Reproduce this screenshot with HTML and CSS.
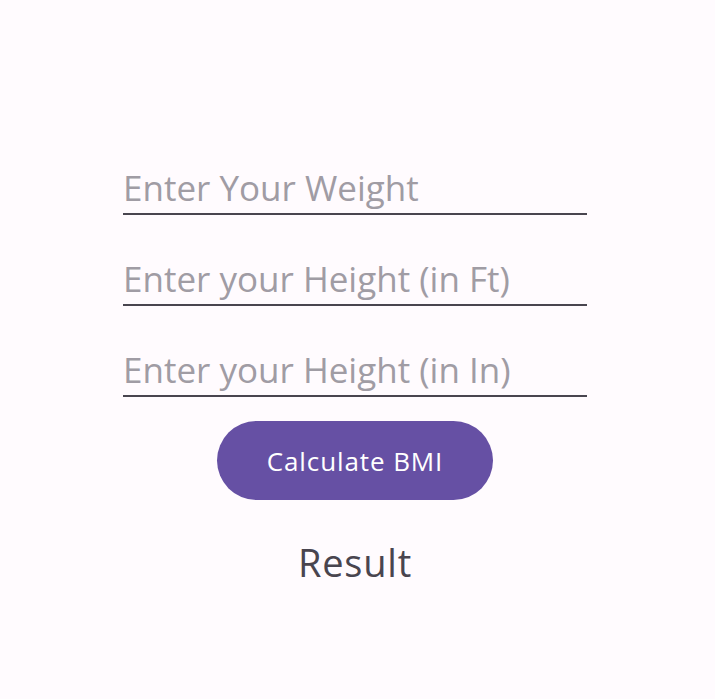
FILE: index.html
```html
<!DOCTYPE html>
<html>
<head>
<meta charset="utf-8">
<link rel="stylesheet" href="styles.css">
</head>
<body>
<main class="screen">
  <form class="form">
    <div class="field"><input class="input" type="text" placeholder="Enter Your Weight"></div>
    <div class="field"><input class="input" type="text" placeholder="Enter your Height (in Ft)"></div>
    <div class="field"><input class="input" type="text" placeholder="Enter your Height (in In)"></div>
    <div class="actions"><button class="btn" type="button">Calculate BMI</button></div>
    <div class="result">Result</div>
  </form>
</main>
</body>
</html>
```

FILE: styles.css
```css
html, body {
  margin: 0;
  padding: 0;
  background: #fffbfe;
}
.screen {
  width: 715px;
  height: 699px;
  padding-top: 124px;
  box-sizing: border-box;
}
.form {
  width: 464px;
  margin-left: 123px;
  display: flex;
  flex-direction: column;
}
.field {
  height: 89px;
  border-bottom: 2px solid #49454f;
  display: flex;
  align-items: flex-end;
}
.input {
  width: 100%;
  border: none;
  outline: none;
  background: transparent;
  padding: 0 0 5px 0;
  font-family: "Open Sans", Roboto, sans-serif;
  font-size: 35px;
  line-height: 40px;
  color: #1c1b1f;
}
.input::placeholder {
  color: #a09ca4;
}
.actions {
  display: flex;
  justify-content: center;
  padding-top: 24px;
}
.btn {
  width: 276px;
  height: 79px;
  border: none;
  border-radius: 40px;
  background: #6650a4;
  color: #ffffff;
  font-family: "Open Sans", Roboto, sans-serif;
  font-size: 26px;
  font-weight: 500;
  letter-spacing: 0.9px;
  padding: 0;
}
.result {
  text-align: center;
  margin-top: 38px;
  font-family: "Open Sans", Roboto, sans-serif;
  font-size: 38px;
  letter-spacing: 0.8px;
  line-height: 48px;
  color: #49454f;
}
```
